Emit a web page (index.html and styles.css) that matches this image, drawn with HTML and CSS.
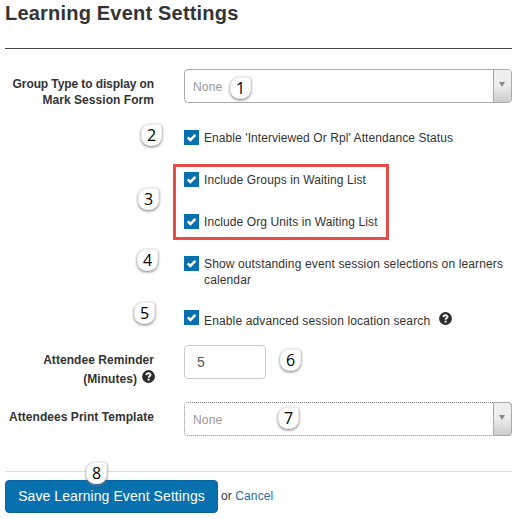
FILE: index.html
```html
<!DOCTYPE html>
<html lang="en">
<head>
<meta charset="utf-8">
<title>Learning Event Settings</title>
<link rel="stylesheet" href="styles.css">
</head>
<body>
<svg class="defs" width="0" height="0">
  <symbol id="check" viewBox="0 0 15 15"><path d="M3.7 7.3 6.4 10 11.4 4.9" fill="none" stroke="#fff" stroke-width="2.5"/></symbol>
  <symbol id="help" viewBox="0 0 13 13"><circle cx="6.5" cy="6.5" r="6.4" fill="#2b2b2b"/><path d="M4.4 5.1C4.5 2.6 8.7 2.7 8.6 4.9 8.4 6.2 6.6 6.2 6.6 7.8" fill="none" stroke="#fff" stroke-width="1.8"/><path d="M5.6 8.7h2v1.8h-2z" fill="#fff"/></symbol>
</svg>
<main class="page">
  <h1>Learning Event Settings</h1>
  <form class="settings">
    <div class="row group-type">
      <label class="label"><span class="tight">Group Type to display on</span><br>Mark Session Form</label>
      <div class="select"><span class="value">None</span><span class="arrow"></span><span class="badge b1">1</span></div>
    </div>
    <div class="option attendance"><svg class="box"><use href="#check"/></svg><span>Enable 'Interviewed Or Rpl' Attendance Status</span><span class="badge b2">2</span></div>
    <div class="highlight">
      <div class="option"><svg class="box"><use href="#check"/></svg><span>Include Groups in Waiting List</span></div>
      <div class="option"><svg class="box"><use href="#check"/></svg><span>Include Org Units in Waiting List</span></div>
      <span class="badge b3">3</span>
    </div>
    <div class="option outstanding"><svg class="box"><use href="#check"/></svg><span>Show outstanding event session selections on learners<br>calendar</span><span class="badge b4">4</span></div>
    <div class="option search"><svg class="box"><use href="#check"/></svg><span>Enable advanced session location search</span><svg class="help"><use href="#help"/></svg><span class="badge b5">5</span></div>
    <div class="row reminder">
      <label class="label">Attendee Reminder<br><span class="minutes">(Minutes) <svg class="help"><use href="#help"/></svg></span></label>
      <div class="input">5<span class="badge b6">6</span></div>
    </div>
    <div class="row template">
      <label class="label">Attendees Print Template</label>
      <div class="select focused"><span class="value">None</span><span class="arrow"></span><span class="badge b7">7</span></div>
    </div>
    <footer class="actions"><button type="button">Save Learning Event Settings</button><span class="or">or <a>Cancel</a></span><span class="badge b8">8</span></footer>
  </form>
</main>
</body>
</html>
```
FILE: styles.css
```css
* { box-sizing: border-box; }
body { margin: 0; background: #fff; color: #333; font: 12px/16px "Liberation Sans", Arial, sans-serif; }
.defs { position: absolute; }
.page { width: 507px; margin-left: 5px; }
h1 { margin: 0; height: 49px; padding-top: 1px; border-bottom: 1px solid #444; font-size: 20px; line-height: 24px; letter-spacing: .2px; white-space: nowrap; }
.settings { padding-top: 20px; }
.row { display: grid; grid-template-columns: 149px 328px; column-gap: 30px; }
.label { text-align: right; font-weight: bold; white-space: nowrap; letter-spacing: .05px; }
.tight { letter-spacing: -.1px; }
.group-type .label { padding-top: 7px; }
.select { position: relative; display: flex; height: 34px; border: 1px solid #aaa; border-radius: 4px; }
.value { flex: 1; padding: 9px 0 0 8px; color: #999; letter-spacing: .2px; }
.arrow { width: 18px; border-left: 1px solid #aaa; border-radius: 0 3px 3px 0; background: linear-gradient(#eee 45%, #ccc); }
.arrow::before { content: ""; display: block; margin: 12px 0 0 5px; width: 0; border: solid transparent; border-width: 5px 3px 0; border-top-color: #888; }
.focused { border-style: dotted; border-color: #888; }
.focused .arrow { margin: -1px; width: 19px; border: 1px solid #aaa; border-radius: 0 4px 4px 0; }
.option { position: relative; display: flex; margin: 22px 0 0 179px; white-space: nowrap; letter-spacing: .1px; }
.attendance { letter-spacing: .08px; }
.box { flex: none; width: 15px; height: 15px; margin-right: 5px; background: #0770ae; }
.highlight { position: relative; width: 216px; height: 76px; margin: 18px 0 0 168px; padding: 5px 0 0 8px; border: 3px solid #e84c46; }
.highlight .option { margin: 0 0 26px; }
.outstanding { margin-top: 16px; letter-spacing: .13px; }
.search { margin-top: 22px; letter-spacing: .14px; }
.search > span:not(.badge) { padding-top: 3px; }
.help { width: 13px; height: 13px; }
.search .help { margin: 2px 0 0 9px; }
.reminder { margin-top: 16px; }
.reminder .label { padding-top: 7px; }
.minutes { display: flex; justify-content: flex-end; gap: 5px; margin-right: -1px; padding-top: 3px; }
.minutes .help { margin-top: -1px; }
.input { position: relative; width: 82px; height: 34px; padding: 8px 12px; border: 1px solid #ccc; border-radius: 4px; color: #555; font-size: 14px; }
.template { margin-top: 15px; }
.template .label { padding-top: 7px; }
.actions { position: relative; display: flex; margin-top: 35px; padding-top: 8px; border-top: 1px solid #ddd; }
button { width: 213px; height: 33px; padding: 0 0 2px; border: 1px solid #0765a0; border-radius: 4px; background: #0770ae; color: #fff; font: 14px/20px "Liberation Sans", Arial, sans-serif; letter-spacing: .08px; white-space: nowrap; }
.or { margin-left: 3px; padding-top: 8px; letter-spacing: .1px; }
a { color: #2272a7; }
.badge { position: absolute; width: 21px; height: 22px; border: 1px solid #eee; border-radius: 9px 3px 9px 9px; background: #fff; box-shadow: 0 1px 3px #777; color: #000; font: 16px/20px "Open Sans", "Noto Sans", sans-serif; text-align: center; letter-spacing: 0; }
.b1 { left: 45px; top: 7px; }
.b2 { left: -43px; top: -6px; }
.b3 { left: -38px; top: 21px; }
.b4 { left: -47px; top: -7px; }
.b5 { left: -50px; top: -8px; }
.b6 { left: 95px; top: 3px; }
.b7 { left: 93px; top: 4px; }
.b8 { left: 81px; top: -10px; }
```
